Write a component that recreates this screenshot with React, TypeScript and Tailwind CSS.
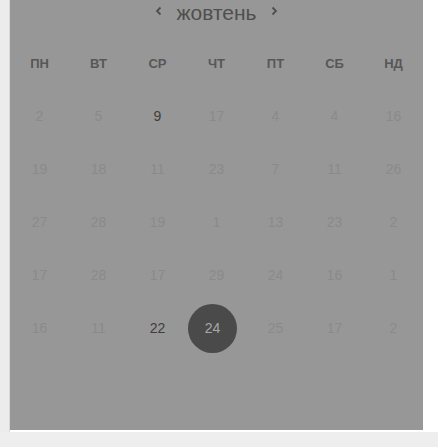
const days = ['пн', 'вт', 'ср', 'чт', 'пт', 'сб', 'нд']

const rows = [
  ['2', '5', '9', '17', '4', '4', '16'],
  ['19', '18', '11', '23', '7', '11', '26'],
  ['27', '28', '19', '1', '13', '23', '2'],
  ['17', '28', '17', '29', '24', '16', '1'],
  ['16', '11', '22', '24', '25', '17', '2'],
]

// which cells are "active" (dark text) and which one is selected
const active = ['0-2', '4-2']
const selected = '4-3'

function Arrow({ dir }: { dir: 'left' | 'right' }) {
  return (
    <svg width="7" height="10" viewBox="0 0 7 10" className="-mt-[5px]">
      <path
        d={dir === 'left' ? 'M5.5 1.5 L2 5 L5.5 8.5' : 'M1.5 1.5 L5 5 L1.5 8.5'}
        fill="none"
        stroke="#4f4f4f"
        strokeWidth="1.8"
      />
    </svg>
  )
}

export default function App() {
  return (
    <div className="w-[438px] h-[447px] bg-white flex flex-col overflow-hidden" style={{ fontFamily: '"Liberation Sans", Arial, sans-serif' }}>
      <div className="flex h-[432px]">
        <div className="w-[9px] bg-[#ececec] shrink-0" />
        <div className="w-[1px] bg-[#d8d8d8] shrink-0" />
        <div className="w-[413px] h-[430px] bg-[#979797] flex flex-col shrink-0">
          {/* Month header */}
          <div className="h-[26px] flex items-center justify-center gap-[14px] text-[#4f4f4f]">
            <Arrow dir="left" />
            <span className="text-[21px] leading-none -mt-[1px]">жовтень</span>
            <Arrow dir="right" />
          </div>

          <div className="h-[11px]" />

          {/* Weekdays */}
          <div className="grid grid-cols-7 h-[53px] items-center">
            {days.map((d) => (
              <div key={d} className="text-center text-[13px] font-bold uppercase text-[#575757]">
                {d}
              </div>
            ))}
          </div>

          {/* Days */}
          {rows.map((row, r) => (
            <div key={r} className="grid grid-cols-7 h-[53px] items-center">
              {row.map((n, c) => {
                const key = `${r}-${c}`
                if (key === selected) {
                  return (
                    <div key={c} className="flex justify-center">
                      <div className="w-[49px] h-[49px] -ml-[8px] rounded-full bg-[#4a4a4a] flex items-center justify-center text-[14px] text-[#a8a8a8]">
                        {n}
                      </div>
                    </div>
                  )
                }
                return (
                  <div
                    key={c}
                    className={`text-center text-[14px] ${active.includes(key) ? 'text-[#3e3e3e]' : 'text-[#8a8a8a]'}`}
                  >
                    {n}
                  </div>
                )
              })}
            </div>
          ))}
        </div>
        <div className="flex-1 bg-white" />
      </div>
      <div className="flex-1 bg-[#eeeeee]" />
    </div>
  )
}
